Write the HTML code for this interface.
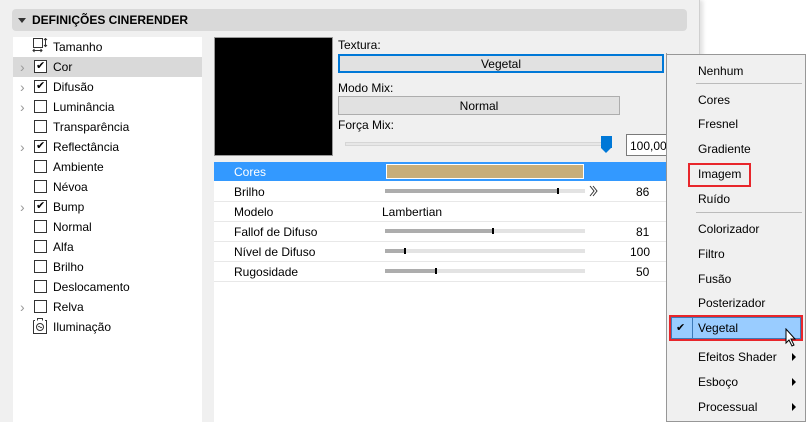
<!DOCTYPE html>
<html><head><meta charset="utf-8"><style>
*{margin:0;padding:0;box-sizing:border-box}
body{width:806px;height:422px;overflow:hidden;background:#fff;font-family:"Liberation Sans","DejaVu Sans",sans-serif;font-size:12px;color:#000;position:relative}
.abs{position:absolute}
.t{position:absolute;white-space:nowrap;line-height:14px}
.cb{position:absolute;width:13px;height:13px;border:1px solid #333;background:#fff}
.chev{position:absolute;color:#999;font-size:14px;line-height:12px}
.bar{position:absolute;height:4px;background:#e3e3e3}
.bar i{position:absolute;left:0;top:0;height:4px;background:#adadad}
.bar b{position:absolute;top:-1px;width:2px;height:6px;background:#000}
.sep{position:absolute;left:214px;width:452px;height:1px;background:#e8e8e8}
.mi{position:absolute;left:698px;white-space:nowrap;line-height:14px}
.arr{position:absolute;left:792px;width:0;height:0;border-top:4px solid transparent;border-bottom:4px solid transparent;border-left:4px solid #000}
</style></head><body>
<div class="abs" style="left:0;top:0;width:700px;height:422px;background:#f0f0f0;border-right:1px solid #d0d0d0;box-shadow:3px 0 4px rgba(0,0,0,.12)"></div>
<div class="abs" style="left:12px;top:9px;width:675px;height:22px;background:#d9d9d9;border-radius:4px"></div>
<div class="abs" style="left:18px;top:18px;border-left:4px solid transparent;border-right:4px solid transparent;border-top:5px solid #333"></div>
<div class="t" style="left:32px;top:13px;font-weight:bold;font-size:12px">DEFINIÇÕES CINERENDER</div>

<div class="abs" style="left:13px;top:37px;width:189px;height:385px;background:#fff"></div>
<div class="abs" style="left:13px;top:57px;width:189px;height:20px;background:#d9d9d9"></div>
<svg class="abs" style="left:31px;top:38px" width="18" height="16" viewBox="0 0 18 16"><rect x="2.5" y="0.5" width="9" height="9" fill="none" stroke="#333"/><path d="M14.5 0.5 V8.5 M13 2 L14.5 0.5 L16 2 M13 7 L14.5 8.5 L16 7 M2 12.5 H11 M3.5 11 L2 12.5 L3.5 14 M9.5 11 L11 12.5 L9.5 14" fill="none" stroke="#333"/></svg>
<div class="t" style="left:53px;top:40px">Tamanho</div>
<div class="chev" style="left:20px;top:61px">›</div><div class="cb" style="left:34px;top:60px"></div><div class="t" style="left:36px;top:59px;font-size:11px">✔</div><div class="t" style="left:53px;top:60px">Cor</div>
<div class="chev" style="left:20px;top:81px">›</div><div class="cb" style="left:34px;top:80px"></div><div class="t" style="left:36px;top:79px;font-size:11px">✔</div><div class="t" style="left:53px;top:80px">Difusão</div>
<div class="chev" style="left:20px;top:101px">›</div><div class="cb" style="left:34px;top:100px"></div><div class="t" style="left:53px;top:100px">Luminância</div>
<div class="cb" style="left:34px;top:120px"></div><div class="t" style="left:53px;top:120px">Transparência</div>
<div class="chev" style="left:20px;top:141px">›</div><div class="cb" style="left:34px;top:140px"></div><div class="t" style="left:36px;top:139px;font-size:11px">✔</div><div class="t" style="left:53px;top:140px">Reflectância</div>
<div class="cb" style="left:34px;top:160px"></div><div class="t" style="left:53px;top:160px">Ambiente</div>
<div class="cb" style="left:34px;top:180px"></div><div class="t" style="left:53px;top:180px">Névoa</div>
<div class="chev" style="left:20px;top:201px">›</div><div class="cb" style="left:34px;top:200px"></div><div class="t" style="left:36px;top:199px;font-size:11px">✔</div><div class="t" style="left:53px;top:200px">Bump</div>
<div class="cb" style="left:34px;top:220px"></div><div class="t" style="left:53px;top:220px">Normal</div>
<div class="cb" style="left:34px;top:240px"></div><div class="t" style="left:53px;top:240px">Alfa</div>
<div class="cb" style="left:34px;top:260px"></div><div class="t" style="left:53px;top:260px">Brilho</div>
<div class="cb" style="left:34px;top:280px"></div><div class="t" style="left:53px;top:280px">Deslocamento</div>
<div class="chev" style="left:20px;top:301px">›</div><div class="cb" style="left:34px;top:300px"></div><div class="t" style="left:53px;top:300px">Relva</div>
<svg class="abs" style="left:32px;top:318px" width="16" height="17" viewBox="0 0 16 17"><path d="M1.5 2.5 H3 M13 2.5 H14.5 V15.5 H1.5 V2.5" fill="none" stroke="#333"/><path d="M5.5 2.5 V0.5 H10.5 V2.5" fill="none" stroke="#333"/><circle cx="8" cy="9" r="3.5" fill="none" stroke="#333"/><path d="M6.2 9 Q7 7.5 8 9 T9.8 9" fill="none" stroke="#333" stroke-width=".8"/></svg>
<div class="t" style="left:53px;top:320px">Iluminação</div>

<div class="abs" style="left:214px;top:37px;width:119px;height:119px;background:#000;border:1px solid #999"></div>
<div class="t" style="left:338px;top:38px">Textura:</div>
<div class="abs" style="left:338px;top:54px;width:326px;height:19px;background:#e1e1e1;border:2px solid #0078d7"></div>
<div class="t" style="left:338px;top:57px;width:326px;text-align:center">Vegetal</div>
<div class="t" style="left:338px;top:81px">Modo Mix:</div>
<div class="abs" style="left:338px;top:96px;width:282px;height:19px;background:#e1e1e1;border:1px solid #adadad"></div>
<div class="t" style="left:338px;top:99px;width:282px;text-align:center">Normal</div>
<div class="t" style="left:338px;top:118px">Força Mix:</div>
<div class="abs" style="left:345px;top:142px;width:262px;height:4px;background:#e7e7e7;border:1px solid #d6d6d6"></div>
<div class="abs" style="left:601px;top:136px;width:11px;height:12px;background:#0078d7"></div>
<div class="abs" style="left:601px;top:148px;border-left:5.5px solid transparent;border-right:5.5px solid transparent;border-top:5px solid #0078d7"></div>
<div class="abs" style="left:626px;top:134px;width:42px;height:22px;background:#fff;border:1px solid #7a7a7a"></div>
<div class="t" style="left:630px;top:139px">100,00</div>

<div class="abs" style="left:214px;top:162px;width:452px;height:260px;background:#fff"></div>
<div class="abs" style="left:214px;top:162px;width:452px;height:19px;background:#3399ff"></div>
<div class="abs" style="left:386px;top:164px;width:198px;height:15px;background:#c8ae7a;border:1px solid #fff"></div>
<div class="t" style="left:234px;top:165px;color:#fff">Cores</div>
<div class="sep" style="top:201px"></div><div class="sep" style="top:221px"></div><div class="sep" style="top:241px"></div><div class="sep" style="top:261px"></div><div class="sep" style="top:281px"></div>
<div class="t" style="left:234px;top:185px">Brilho</div>
<div class="bar" style="left:385px;top:189px;width:200px"><i style="width:173px"></i><b style="left:172px"></b></div>
<svg class="abs" style="left:589px;top:185px" width="10" height="12" viewBox="0 0 10 12"><path d="M1 1 L5 6 L1 11 M4 1 L8 6 L4 11" fill="none" stroke="#333"/></svg>
<div class="t" style="left:636px;top:185px">86</div>
<div class="t" style="left:234px;top:205px">Modelo</div>
<div class="t" style="left:382px;top:205px">Lambertian</div>
<div class="t" style="left:234px;top:225px">Fallof de Difuso</div>
<div class="bar" style="left:385px;top:229px;width:200px"><i style="width:108px"></i><b style="left:107px"></b></div>
<div class="t" style="left:636px;top:225px">81</div>
<div class="t" style="left:234px;top:245px">Nível de Difuso</div>
<div class="bar" style="left:385px;top:249px;width:200px"><i style="width:20px"></i><b style="left:19px"></b></div>
<div class="t" style="left:630px;top:245px">100</div>
<div class="t" style="left:234px;top:265px">Rugosidade</div>
<div class="bar" style="left:385px;top:269px;width:200px"><i style="width:50px"></i><b style="left:50px"></b></div>
<div class="t" style="left:636px;top:265px">50</div>
<div class="abs" style="left:666px;top:53px;width:1px;height:369px;background:#999"></div>

<div class="abs" style="left:666px;top:54px;width:140px;height:368px;background:#f0f0f0;border:1px solid #979797"></div>
<div class="abs" style="left:696px;top:83px;width:106px;height:1px;background:#bbb"></div>
<div class="abs" style="left:696px;top:212px;width:106px;height:1px;background:#bbb"></div>
<div class="mi" style="top:64px">Nenhum</div>
<div class="mi" style="top:93px">Cores</div>
<div class="mi" style="top:117px">Fresnel</div>
<div class="mi" style="top:142px">Gradiente</div>
<div class="abs" style="left:688px;top:163px;width:63px;height:24px;border:2px solid #e8262b"></div>
<div class="mi" style="top:167px">Imagem</div>
<div class="mi" style="top:192px">Ruído</div>
<div class="mi" style="top:222px">Colorizador</div>
<div class="mi" style="top:247px">Filtro</div>
<div class="mi" style="top:272px">Fusão</div>
<div class="mi" style="top:296px">Posterizador</div>
<div class="abs" style="left:669px;top:315px;width:134px;height:26px;border:2px solid #e8262b"></div>
<div class="abs" style="left:671px;top:317px;width:130px;height:22px;background:#99ccff;border:1px solid #3d7ab8"></div>
<div class="abs" style="left:671px;top:317px;width:22px;height:22px;border:1px solid #3d7ab8"></div>
<div class="t" style="left:676px;top:321px;font-size:11px">✔</div>
<div class="mi" style="top:321px">Vegetal</div>
<svg class="abs" style="left:785px;top:328px" width="14" height="20" viewBox="0 0 14 20"><path d="M1 1 L1 15 L4 12 L7 18 L9 17 L6 11 L10 11 Z" fill="#fff" stroke="#000" stroke-width="1"/></svg>
<div class="mi" style="top:350px">Efeitos Shader</div><div class="arr" style="top:353px"></div>
<div class="mi" style="top:375px">Esboço</div><div class="arr" style="top:378px"></div>
<div class="mi" style="top:400px">Processual</div><div class="arr" style="top:403px"></div>
</body></html>
